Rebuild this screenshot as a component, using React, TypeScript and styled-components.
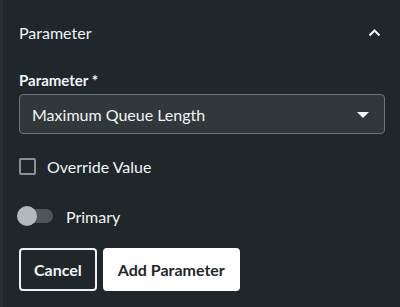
import React, { useState } from 'react';
import styled, { createGlobalStyle } from 'styled-components';

const GlobalStyle = createGlobalStyle`
  html, body {
    margin: 0;
    padding: 0;
    background-color: #1f272a;
  }
  body {
    font-family: Lato, "Open Sans", sans-serif;
    color: #f2f4f5;
  }
`;

const Panel = styled.div`
  width: 400px;
  height: 307px;
  box-sizing: border-box;
  background-color: #1f272a;
  border-left: 3px solid #263034;
  padding: 21px 15px 0 16px;
  display: flex;
  flex-direction: column;
`;

const Header = styled.div`
  display: flex;
  align-items: center;
  justify-content: space-between;
  height: 24px;
`;

const HeaderTitle = styled.span`
  font-size: 16px;
  line-height: 24px;
  color: #f2f4f5;
`;

const CollapseButton = styled.button`
  background: none;
  border: none;
  padding: 0;
  margin-right: 4px;
  width: 14px;
  height: 14px;
  display: flex;
  align-items: center;
  justify-content: center;
  cursor: pointer;
`;

const FieldLabel = styled.label`
  margin-top: 26px;
  font-size: 15px;
  font-weight: 700;
  line-height: 18px;
  color: #f2f4f5;
`;

const SelectBox = styled.div`
  margin-top: 5px;
  height: 40px;
  box-sizing: border-box;
  border: 1px solid #6d7579;
  border-radius: 4px;
  background-color: #31383b;
  display: flex;
  align-items: center;
  justify-content: space-between;
  padding: 0 15px 0 12px;
  font-size: 16px;
  color: #f2f4f5;
`;

const Caret = styled.span`
  width: 0;
  height: 0;
  border-left: 6px solid transparent;
  border-right: 6px solid transparent;
  border-top: 6px solid #f5f6f7;
  margin-top: 1px;
`;

const CheckRow = styled.label`
  margin-top: 23px;
  display: flex;
  align-items: center;
  gap: 11px;
  height: 18px;
  font-size: 16px;
  cursor: pointer;
`;

const CheckBox = styled.span<{ $checked: boolean }>`
  width: 17px;
  height: 17px;
  box-sizing: border-box;
  border: 2px solid #8a9094;
  border-radius: 2px;
  background-color: ${({ $checked }) => ($checked ? '#8a9094' : 'transparent')};
`;

const ToggleRow = styled.div`
  margin-top: 31px;
  display: flex;
  align-items: center;
  gap: 13px;
  height: 20px;
  font-size: 16px;
`;

const Track = styled.span<{ $on: boolean }>`
  position: relative;
  width: 36px;
  height: 14px;
  margin-left: -2px;
  border-radius: 7px;
  background-color: ${({ $on }) => ($on ? '#5a8fd1' : '#4f5659')};
  cursor: pointer;
`;

const Thumb = styled.span<{ $on: boolean }>`
  position: absolute;
  top: -3px;
  left: ${({ $on }) => ($on ? '17px' : '0')};
  width: 20px;
  height: 20px;
  border-radius: 50%;
  background-color: #b5b8ba;
`;

const Actions = styled.div`
  margin-top: 22px;
  display: flex;
  gap: 6px;
`;

const Button = styled.button<{ $primary?: boolean }>`
  height: 43px;
  box-sizing: border-box;
  padding: 0 13px;
  border-radius: 4px;
  border: 2px solid ${({ $primary }) => ($primary ? '#ffffff' : '#eef0f1')};
  background-color: ${({ $primary }) => ($primary ? '#ffffff' : 'transparent')};
  color: ${({ $primary }) => ($primary ? '#1f272a' : '#f2f4f5')};
  font-family: Lato, "Open Sans", sans-serif;
  font-size: 16px;
  font-weight: 700;
  cursor: pointer;
`;

const App: React.FC = () => {
  const [override, setOverride] = useState(false);
  const [primary, setPrimary] = useState(false);

  return (
    <>
      <GlobalStyle />
      <Panel>
        <Header>
          <HeaderTitle>Parameter</HeaderTitle>
          <CollapseButton aria-label="Collapse">
            <svg width="13" height="8" viewBox="0 0 13 8">
              <path d="M1.5 6.5 L6.5 1.5 L11.5 6.5" fill="none" stroke="#f5f6f7" strokeWidth="2" />
            </svg>
          </CollapseButton>
        </Header>

        <FieldLabel>Parameter *</FieldLabel>
        <SelectBox>
          <span>Maximum Queue Length</span>
          <Caret />
        </SelectBox>

        <CheckRow onClick={() => setOverride(!override)}>
          <CheckBox $checked={override} />
          Override Value
        </CheckRow>

        <ToggleRow>
          <Track $on={primary} onClick={() => setPrimary(!primary)}>
            <Thumb $on={primary} />
          </Track>
          Primary
        </ToggleRow>

        <Actions>
          <Button type="button">Cancel</Button>
          <Button type="button" $primary>Add Parameter</Button>
        </Actions>
      </Panel>
    </>
  );
};

export default App;
